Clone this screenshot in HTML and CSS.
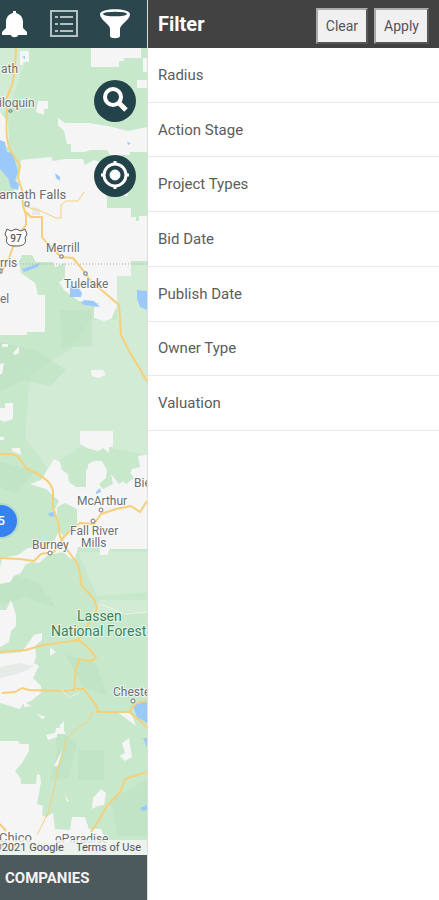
FILE: index.html
```html
<!DOCTYPE html>
<html lang="en">
<head>
<meta charset="utf-8">
<meta name="viewport" content="width=device-width, initial-scale=1">
<title>Project Map Filter</title>
<link rel="stylesheet" href="styles.css">
</head>
<body>
<div class="app">
  <div class="map-pane">
    <nav class="toolbar" aria-label="Main">
      <button class="tool" type="button" aria-label="Notifications">
        <svg width="28" height="30" viewBox="0 0 28 30"><path fill="#fff" d="M13 2h3v2c4 1 7 4 7 9v6l4 4v3H2v-3l4-4v-6c0-5 3-8 7-9zM11 26h7c0 3-7 3-7 0z"/></svg>
      </button>
      <button class="tool" type="button" aria-label="List">
        <svg width="28" height="28" viewBox="0 0 28 28" fill="none" stroke="#b5c0c3" stroke-width="2"><path d="M1 1h26v25H1z"/><path d="M10 7h13M10 14h13M10 21h13"/><path d="M5 7h3M5 14h3M5 21h3"/></svg>
      </button>
      <button class="tool" type="button" aria-label="Filter">
        <svg width="32" height="32" viewBox="0 0 32 32"><path fill="#fff" d="M1 6c0-6.500 30-6.500 30 0 0 3-2 5-5 8-3 3-5 4.500-5 7v7c0 3-10 3-10 0v-7c0-2.500-2-4-5-7-3-3-5-5-5-8z"/><ellipse cx="16" cy="6" rx="12" ry="2.300" fill="#2b474d"/></svg>
      </button>
    </nav>
    <main class="map">
      <svg class="map-art" viewBox="0 48 147 807" preserveAspectRatio="xMidYMin slice" role="img" aria-label="Map of Northern California">
        <path fill="#c8e8cc" d="M0 48h147v807H0z"/>
        <path fill="#d2ebd4" d="M30 375l40-25 20-30h27v-55h30v190l-60-12-40 25-22-30zM0 48h30L12 100 0 118zM100 600h47v14l-23-2-16 10-17-9zM78 552h69v40l-50 4z"/>
        <g fill="#b9e2c0" opacity=".5"><path d="M60 310h32v36l-30 1zM0 342l37 9 29 19-16 16-27-6-23 12zM0 570l39 13 17 25-30-11-26 8zM65 654l31 10 11 31-24-8zM55 728l22 16-9 34-18 3 7-28zM78 750h26v30H78z"/><path d="M0 462l36 9-20 22-16-6zM110 800l37-20v56h-29z"/></g>
        <g fill="#f5f5f5">
          <path d="M91 48h50v10h-17v3h-5v6H91zM20 51h9v11h-6v3h-3zM58 118l7 5h24l19 3 20 5 19-4v25h-17v3h-20l-3-5H90l-5 2H71v-8h-4l-3-13-6-6zM38 101h10v8h-4v6l-8-3zM137 80h10v8h-10zM143 58h4v14h-4zM0 112l8 10 1 26-9-5z"/>
          <path d="M21 160l30-3 2 4 12-2h18l2 6 9-5 7 2v4h27v30h-21v12h24v9h5v4h3v-5h8v45h-16v15h-14v30l-6 13-7 2-10-3v-10l5-5-20-2-15-11-5-8 6-3v-16l-10 4-2-5H36l-4-7H22l-2 5H0v-62l14-6z"/>
          <path d="M0 262l18-7 3 18 14 10 3 12h7v37H27v3H0z"/>
          <path d="M91 370h12l3 5-8 3-6-2zM13 403v16l-9 3-4-2v-12h5v-5zM12 448h8l1 7-9-4zM0 437h4v3H0zM13 353l6-7v7l-4 2zM2 344h6v3H2zM0 364l4-1-2 11H0zM80 431h33v16h-4v6l-6-5-5 3-11-3-7-4z"/>
          <path d="M54 459l6 3 2 8 6 4 1 8 7 5h10v-22l8-4h8l5 9-1 8-7 6 4 5 10-5-2-10 8 10 10-7 3-8 8-2-2-11 13-2v95h-41l-3 6h-7v-8H78l-3 12-5-1-7-6-15 3-9 8-8-1-6 3-4 8-7 3-4 6-10 2v-16l2-10 16-3 10-7 14-1 12-6 5-10-4-22 4-8-13-12-16-5 11-4z"/>
          <path d="M0 610h6l5-10 5 15v11l-5 5-2 11-9 5zM0 654l22-2 12-17 8-2v7l-7 6 1 11-2 6 5 3-6 12 8 8v7l-10 8-8 3-3 5-20-6zM0 741h18l2 3h9v7l-7 12-7 8 6 8v5h15l1-10 3 1 1 7-4 22 6 2-1 9 4 2 7-4 2 16 15 1 2-13h13l4 12h12l6 14H0z"/>
          <path d="M56 728h6l4 6h-9v3l-9 3-2-5 9-2zM59 726l5-5v12zM129 738l3 19-7 4-5-5 5-3-3-10zM117 712h14l5 14-12-9zM101 789l5 4-2 12-6 1-6 3 1-11zM50 647l6 5-6 4zM24 702l8 4-8 1zM37 714l9 3-4 2zM65 795l4 6-2 1zM62 750l-4 16h-4z"/>
        </g>
        <path fill="#c8e8cc" d="M57 507l8-4 12 6v18l-14 9-6-12zM76 448h12v20l-8 10-8-6zM118 476l10-6 6 8-8 6z"/>
        <path fill="#e7ebe7" d="M0 667l20-4 14 3-16 8-18 4zM33 206l7 3v6h-8z"/>
        <g fill="#9bcafa">
          <path d="M0 140l5 2 2 10 6 1 5 19-3 8 4 4-1 6-7-2-3-10-8-9zM70 286l8 1 4 6-1 4H70zM84 300l10 1 6 6-16-2-3-2zM137 290l10 1v19l-7-3-3-8zM22 269l18-6-2 4-14 5zM55 173l5 4v4l-4-3zM96 492l4-4 1 4-5 2zM48 513l6-1 1 4-5 1zM133 706l5-4 9-2v23l-10-6zM140 808l7-3v5l-5 1zM143 738h4v9zM22 57l3-1v3zM127 142l4 1-3 2z"/>
        </g>
        <path d="M14 264h133" stroke="#a8a8a8" stroke-dasharray="1 2"/>
        <g fill="none" stroke="#f6cf79" stroke-width="2" stroke-linejoin="round">
          <path d="M16 48c-1 18-1 27-4 37-4 12-8 14-5 24-1 24-1 35 5 44l8 12-2 13 4 12 1 16 3 9v10l-4 5-4 8-5 9-4 11-4 8-5 7"/>
          <path d="M26 212l5 5h11v20l4 5 15 15 12 1 9 11 9 12 28 24 2 30 7 14 20 34"/>
          <path d="M27 207l14 4 15 7h5v-13l5-4h12l6-9" stroke-width="1"/>
          <path d="M0 454c20-2 21 7 26 14 15 7 25 13 27 23v17l5 14 2 14 8 15 10 13 4 22 12 13 3 9c-5 13-12 20-20 34M0 558l20 1 14 2 7-7 13-2 8-13 9-9 9-7 14 1 7-10 15-5 15-3 9 6 7-11"/>
          <path d="M0 652l26-2 17-5 36-5 10 9 7 8-4 4-13-2-3 10-1 10-1 11-10 1-35-1-7-2-7 4-13 1M76 689l8 0 13 18 1 5h32c2-7 9-11 18-11M129 712l9 7 9 8M147 772l-22 7-5 13-13 14-8 14-8 12"/>
          <path d="M92 712l-3 8-11 8-13 12 1 5-7 19-5 26-6 23-11 22" stroke-width="1"/>
          <path d="M0 824l6 7"/>
        </g>
        <path fill="none" stroke="#eef1e3" d="M100 604l25 10 22-2M62 690l7 8 11-6"/>
        <g fill="#fff" stroke="#777"><path d="M9 110h3v2H9zM25 202h4v4h-4zM60 255h3v3h-3zM84 272h3v3h-3zM0 269h2v4H0z"/><circle cx="50" cy="553" r="2"/><circle cx="93" cy="521" r="2"/><circle cx="101" cy="510" r="2"/><circle cx="133" cy="701" r="2"/></g>
        <path d="M7 229l4 2 5-2 5 2 4-2 2 5-2 4c2 6-2 8-9 8s-11-2-9-8l-2-4z" fill="#fff" stroke="#555"/>
        <text class="route" x="16" y="242">97</text>
        <g class="place">
          <text x="1" y="73">ath</text><text x="-1" y="107">iloquin</text><text class="city" x="-1" y="199">amath Falls</text><text x="46" y="252">Merrill</text><text x="0" y="267">rris</text><text x="64" y="288">Tulelake</text><text x="0" y="303">el</text>
          <text x="134" y="487">Bie</text><text x="77" y="505">McArthur</text><text x="70" y="535">Fall River</text><text x="81" y="547">Mills</text><text x="32" y="549">Burney</text><text x="113" y="696">Chester</text><text class="city" x="-1" y="842">Chico</text><text x="55" y="843">oParadise</text>
        </g>
        <g class="forest"><text x="77" y="621">Lassen</text><text x="51" y="636">National Forest</text></g>
        <circle cx="1" cy="521" r="18" fill="#3d83ee" opacity=".15"/><circle cx="1" cy="521" r="16" fill="#3682f1"/>
        <text class="cluster" x="5" y="525">5</text>
      </svg>
      <div class="map-controls">
        <button class="round" type="button" aria-label="Search map"><svg width="42" height="42" viewBox="0 0 42 42" fill="none" stroke="#fff"><circle cx="19" cy="17" r="8" stroke-width="4"/><path d="M25 23l7 7" stroke-width="5"/></svg></button>
        <button class="round" type="button" aria-label="My location"><svg width="42" height="42" viewBox="0 0 42 42" fill="none" stroke="#fff"><circle cx="21" cy="20" r="11" stroke-width="3"/><circle cx="21" cy="20" r="5" fill="#fff"/><path stroke-width="3" d="M21 6v4M21 30v4M7 20h4M31 20h4"/></svg></button>
      </div>
      <footer class="credit"><span>©2021 Google</span><a href="#terms">Terms of Use</a></footer>
    </main>
    <button class="companies" type="button">COMPANIES</button>
  </div>
  <aside class="filter">
    <header class="filter-head">
      <h1>Filter</h1>
      <button class="action" type="button">Clear</button>
      <button class="action" type="button">Apply</button>
    </header>
    <div class="filter-list">
      <button type="button">Radius</button>
      <button type="button">Action Stage</button>
      <button type="button">Project Types</button>
      <button type="button">Bid Date</button>
      <button type="button">Publish Date</button>
      <button type="button">Owner Type</button>
      <button type="button">Valuation</button>
    </div>
  </aside>
</div>
</body>
</html>
```
FILE: styles.css
```css
* {
  box-sizing: border-box;
}

body {
  margin: 0;
  font-family: Roboto, "Liberation Sans", sans-serif;
  color: #555;
}

button {
  margin: 0;
  border: 0;
  font: inherit;
}

svg {
  display: block;
}

.app {
  display: grid;
  grid-template-columns: 148px 1fr;
  min-height: 100vh;
}

.map-pane {
  display: flex;
  flex-direction: column;
  min-width: 0;
  border-right: 1px solid #ddd;
}

.toolbar {
  display: flex;
  align-items: center;
  justify-content: space-between;
  height: 48px;
  padding-right: 16px;
  background: #2b474d;
}

.tool {
  padding: 0;
  background: none;
}

.map {
  position: relative;
  flex: 1;
  overflow: hidden;
  background: #f5f5f5;
}

.map-art {
  position: absolute;
  inset: 0;
  width: 100%;
  height: 100%;
}

.place {
  font-size: 12px;
  fill: #6c6e70;
  stroke: #fff;
  stroke-width: 2px;
  stroke-opacity: 0.7;
  paint-order: stroke;
}

.place .city {
  font-size: 13px;
}

.forest {
  font-size: 14px;
  fill: #39835b;
  stroke: #e5f5e8;
  stroke-width: 2px;
  paint-order: stroke;
}

.route {
  font-size: 10px;
  font-weight: 500;
  text-anchor: middle;
  fill: #555;
}

.cluster {
  font-size: 13px;
  font-weight: 500;
  text-anchor: end;
  fill: #fff;
}

.map-controls {
  position: absolute;
  top: 32px;
  right: 11px;
  display: grid;
  gap: 33px;
}

.round {
  width: 42px;
  height: 42px;
  padding: 0;
  border-radius: 50%;
  background: #23434b;
}

.credit {
  position: absolute;
  right: 0;
  bottom: 0;
  left: 0;
  display: flex;
  justify-content: flex-end;
  gap: 12px;
  height: 15px;
  padding-right: 6px;
  background: rgba(245, 245, 245, 0.8);
  font-size: 11px;
  line-height: 15px;
  white-space: nowrap;
}

.credit a {
  color: inherit;
  text-decoration: none;
}

.companies {
  height: 45px;
  padding: 0 5px;
  background: #4d5a5d;
  color: #f4f4f4;
  font-size: 15px;
  font-weight: 700;
  text-align: left;
}

.filter {
  min-width: 0;
  background: #fff;
}

.filter-head {
  display: flex;
  align-items: center;
  gap: 6px;
  height: 48px;
  padding: 0 10px;
  background: #424242;
}

h1 {
  flex: 1;
  margin: 0;
  color: #fff;
  font-size: 20px;
  font-weight: 700;
  line-height: 24px;
}

.action {
  height: 36px;
  margin-top: 4px;
  padding: 0 8px;
  border: 2px outset #aaa;
  background: #f0f0f0;
  color: #555;
  font-size: 14px;
}

.filter-list {
  display: grid;
  grid-auto-rows: 1fr;
  min-height: 383px;
}

.filter-list button {
  padding: 0 10px;
  border-bottom: 1px solid #e9e9e9;
  background: #fff;
  color: #5c5c5c;
  font-size: 15px;
  text-align: left;
}
```
